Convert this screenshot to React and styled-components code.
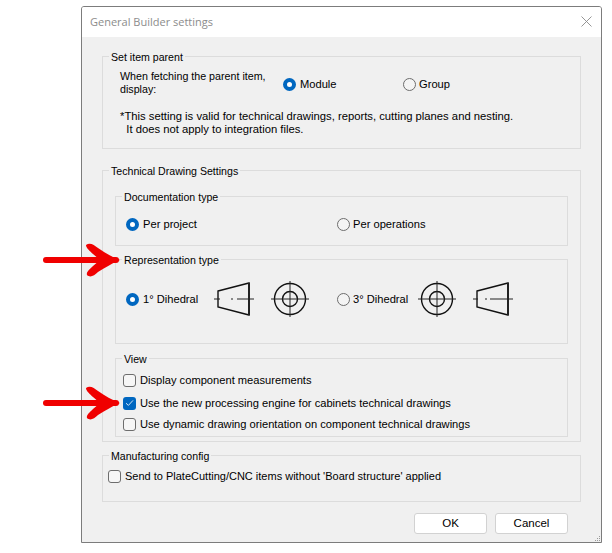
import React from 'react';
import styled, { createGlobalStyle } from 'styled-components';

const GlobalStyle = createGlobalStyle`
  html, body {
    margin: 0;
    background: #fff;
  }
  * {
    box-sizing: border-box;
  }
`;

const Page = styled.div`
  position: relative;
  width: 612px;
  height: 553px;
  padding: 6px 0 0 81px;
  font-family: "Liberation Sans", Arial, sans-serif;
  font-size: 11.15px;
  line-height: 13px;
  color: #000;
`;

const Dialog = styled.div`
  position: relative;
  width: 521px;
  height: 537px;
  background: #f0f0f0;
  border: 1px solid #7c7c7c;
  border-radius: 3px 3px 0 0;
  overflow: hidden;
`;

const TitleBar = styled.div`
  display: flex;
  align-items: center;
  justify-content: space-between;
  height: 30px;
  padding: 0 9px 2px 8px;
  background: #fff;
`;

const Title = styled.div`
  font-family: "Open Sans", sans-serif;
  font-size: 11px;
  color: #8c8c8c;
`;

const Content = styled.div`
  padding: 13px 20px 0;
`;

const Group = styled.fieldset`
  display: block;
  margin: ${(p) => p.$top || 0}px 0 0;
  padding: 0;
  min-width: 0;
  height: ${(p) => p.$height}px;
  border: 1px solid #dcdcdc;
`;

const Legend = styled.legend`
  height: 13px;
  margin-left: 6px;
  padding: 1px 2px 0;
  font-size: 10.6px;
  line-height: 13px;
`;

const GroupBody = styled.div`
  padding: ${(p) => p.$pad};
`;

const Row = styled.div`
  display: flex;
  align-items: center;
  margin-top: ${(p) => p.$top || 0}px;
  font-size: ${(p) => (p.$size ? `${p.$size}px` : 'inherit')};
`;

const Prompt = styled.div`
  width: 163px;
  margin-bottom: 2px;
  font-size: 10.7px;
`;

const Note = styled.div`
  margin-top: 12px;
  font-size: 11.28px;
  white-space: pre-wrap;
`;

const Option = styled.label`
  display: flex;
  align-items: center;
  gap: 4px;
  width: ${(p) => (p.$width ? `${p.$width}px` : 'auto')};
  height: 14px;
  white-space: nowrap;
`;

const Radio = styled.span`
  flex: none;
  width: 13px;
  height: 13px;
  border-radius: 50%;
  ${(p) =>
    p.$checked
      ? 'border: 4px solid #0067c0; background: #fff;'
      : 'border: 1px solid #6d6d6d; background: #f4f4f4; margin-right: -1px;'}
`;

const Check = styled.span`
  flex: none;
  display: flex;
  align-items: center;
  justify-content: center;
  width: 13px;
  height: 13px;
  border-radius: 3px;
  ${(p) =>
    p.$checked
      ? 'background: #0067c0;'
      : 'border: 1px solid #6d6d6d; background: #f6f6f6;'}
`;

const DrawingSet = styled.div`
  display: flex;
  align-items: center;
  gap: 17px;
  width: ${(p) => p.$width}px;
`;

const DrawingOption = styled(Option)`
  width: ${(p) => p.$width}px;
  flex: none;
`;

const Footer = styled.div`
  display: flex;
  justify-content: flex-end;
  gap: 8px;
  margin-top: 11px;
  padding-right: 13px;
`;

const Button = styled.button`
  width: 73px;
  height: 21px;
  padding: 0;
  background: #fff;
  border: 1px solid #d2d2d2;
  border-radius: 3px;
  font: 11.5px/13px "Liberation Sans", Arial, sans-serif;
  color: #000;
`;

const CloseIcon = styled.svg`
  display: block;
`;

const Grip = styled.svg`
  position: absolute;
  right: 1px;
  bottom: 1px;
`;

const Arrow = styled.svg`
  position: absolute;
  left: 40px;
  top: ${(p) => p.$top}px;
`;

function RedArrow({ top }) {
  return (
    <Arrow $top={top} width="84" height="40" viewBox="0 0 84 40">
      <path d="M6 20 H76" fill="none" stroke="#f00000" strokeWidth="6" strokeLinecap="round" />
      <path
        d="M46 5 C50 2 54 5 58 8 C65 13 72 17 80 20 C72 23 65 28 58 32 C54 36 50 38 47 35 C46 32 50 29 53 26 L60 20 L53 14 C50 11 46 8 46 5 Z"
        fill="#f00000"
      />
    </Arrow>
  );
}

function ConeDrawing({ flipped }) {
  return (
    <svg width="40" height="34" viewBox="0 0 40 34" style={{ flex: 'none' }}>
      <path d="M4 9 L35 1 V33 L4 25 Z" fill="none" stroke="#111" strokeWidth="1.4" />
      <path d="M35 1 V33" fill="none" stroke="#222" strokeWidth="2" />
      <path
        d={flipped ? 'M0 17 H5 M12 17 H14 M17 17 H40' : 'M0 17 H6 M17 17 H19 M23 17 H40'}
        fill="none"
        stroke="#222"
        strokeWidth="1"
      />
    </svg>
  );
}

function CircleDrawing() {
  return (
    <svg width="38" height="36" viewBox="0 0 38 36" style={{ flex: 'none' }}>
      <circle cx="19" cy="18" r="15.5" fill="none" stroke="#111" strokeWidth="1.4" />
      <circle cx="19" cy="18" r="7.5" fill="none" stroke="#111" strokeWidth="1.4" />
      <path d="M0 18 H38 M19 0 V36" fill="none" stroke="#222" strokeWidth="1" />
    </svg>
  );
}

function CheckOption({ checked, children }) {
  return (
    <Option>
      <Check $checked={checked}>
        {checked && (
          <svg width="9" height="8" viewBox="0 0 9 8">
            <path d="M1 4.2 L3.4 6.4 L8 1.4" fill="none" stroke="#cfe3f5" strokeWidth="1" />
          </svg>
        )}
      </Check>
      {children}
    </Option>
  );
}

export default function App() {
  return (
    <Page>
      <GlobalStyle />
      <Dialog>
        <TitleBar>
          <Title>General Builder settings</Title>
          <CloseIcon width="11" height="11" viewBox="0 0 11 11">
            <path d="M0.5 0.5 L10.5 10.5 M10.5 0.5 L0.5 10.5" stroke="#8a8a8a" strokeWidth="0.9" />
          </CloseIcon>
        </TitleBar>
        <Content>
          <Group $height={99}>
            <Legend>Set item parent</Legend>
            <GroupBody $pad="7px 0 0 17px">
              <Row>
                <Prompt>
                  When fetching the parent item,
                  <br />
                  display:
                </Prompt>
                <Option $width={120}>
                  <Radio $checked />
                  Module
                </Option>
                <Option>
                  <Radio />
                  Group
                </Option>
              </Row>
              <Note>
                {'*This setting is valid for technical drawings, reports, cutting planes and nesting.\n  It does not apply to integration files.'}
              </Note>
            </GroupBody>
          </Group>

          <Group $top={15} $height={278}>
            <Legend>Technical Drawing Settings</Legend>
            <GroupBody $pad="13px 12px 0">
              <Group $height={56}>
                <Legend>Documentation type</Legend>
                <GroupBody $pad="14px 0 0 10px">
                  <Row>
                    <Option $width={211}>
                      <Radio $checked />
                      Per project
                    </Option>
                    <Option>
                      <Radio />
                      Per operations
                    </Option>
                  </Row>
                </GroupBody>
              </Group>

              <Group $top={7} $height={91}>
                <Legend>Representation type</Legend>
                <GroupBody $pad="15px 0 0 10px">
                  <Row>
                    <DrawingOption $width={88}>
                      <Radio $checked />
                      1° Dihedral
                    </DrawingOption>
                    <DrawingSet $width={123}>
                      <ConeDrawing />
                      <CircleDrawing />
                    </DrawingSet>
                    <DrawingOption $width={81}>
                      <Radio />
                      3° Dihedral
                    </DrawingOption>
                    <DrawingSet $width={96}>
                      <CircleDrawing />
                      <ConeDrawing flipped />
                    </DrawingSet>
                  </Row>
                </GroupBody>
              </Group>

              <Group $top={8} $height={85}>
                <Legend>View</Legend>
                <GroupBody $pad="8px 0 0 7px">
                  <Row>
                    <CheckOption>Display component measurements</CheckOption>
                  </Row>
                  <Row $top={9}>
                    <CheckOption checked>Use the new processing engine for cabinets technical drawings</CheckOption>
                  </Row>
                  <Row $top={7}>
                    <CheckOption>Use dynamic drawing orientation on component technical drawings</CheckOption>
                  </Row>
                </GroupBody>
              </Group>
            </GroupBody>
          </Group>

          <Group $top={7} $height={53}>
            <Legend>Manufacturing config</Legend>
            <GroupBody $pad="7px 0 0 5px">
              <Row $size={11}>
                <CheckOption>Send to PlateCutting/CNC items without 'Board structure' applied</CheckOption>
              </Row>
            </GroupBody>
          </Group>

          <Footer>
            <Button>OK</Button>
            <Button>Cancel</Button>
          </Footer>
        </Content>
        <Grip width="5" height="5" viewBox="0 0 5 5">
          <path d="M4 0 H5 V1 H4 Z M2 2 H3 V3 H2 Z M4 2 H5 V3 H4 Z M0 4 H1 V5 H0 Z M2 4 H3 V5 H2 Z M4 4 H5 V5 H4 Z" fill="#9a9a9a" />
        </Grip>
      </Dialog>
      <RedArrow top={240} />
      <RedArrow top={383} />
    </Page>
  );
}
